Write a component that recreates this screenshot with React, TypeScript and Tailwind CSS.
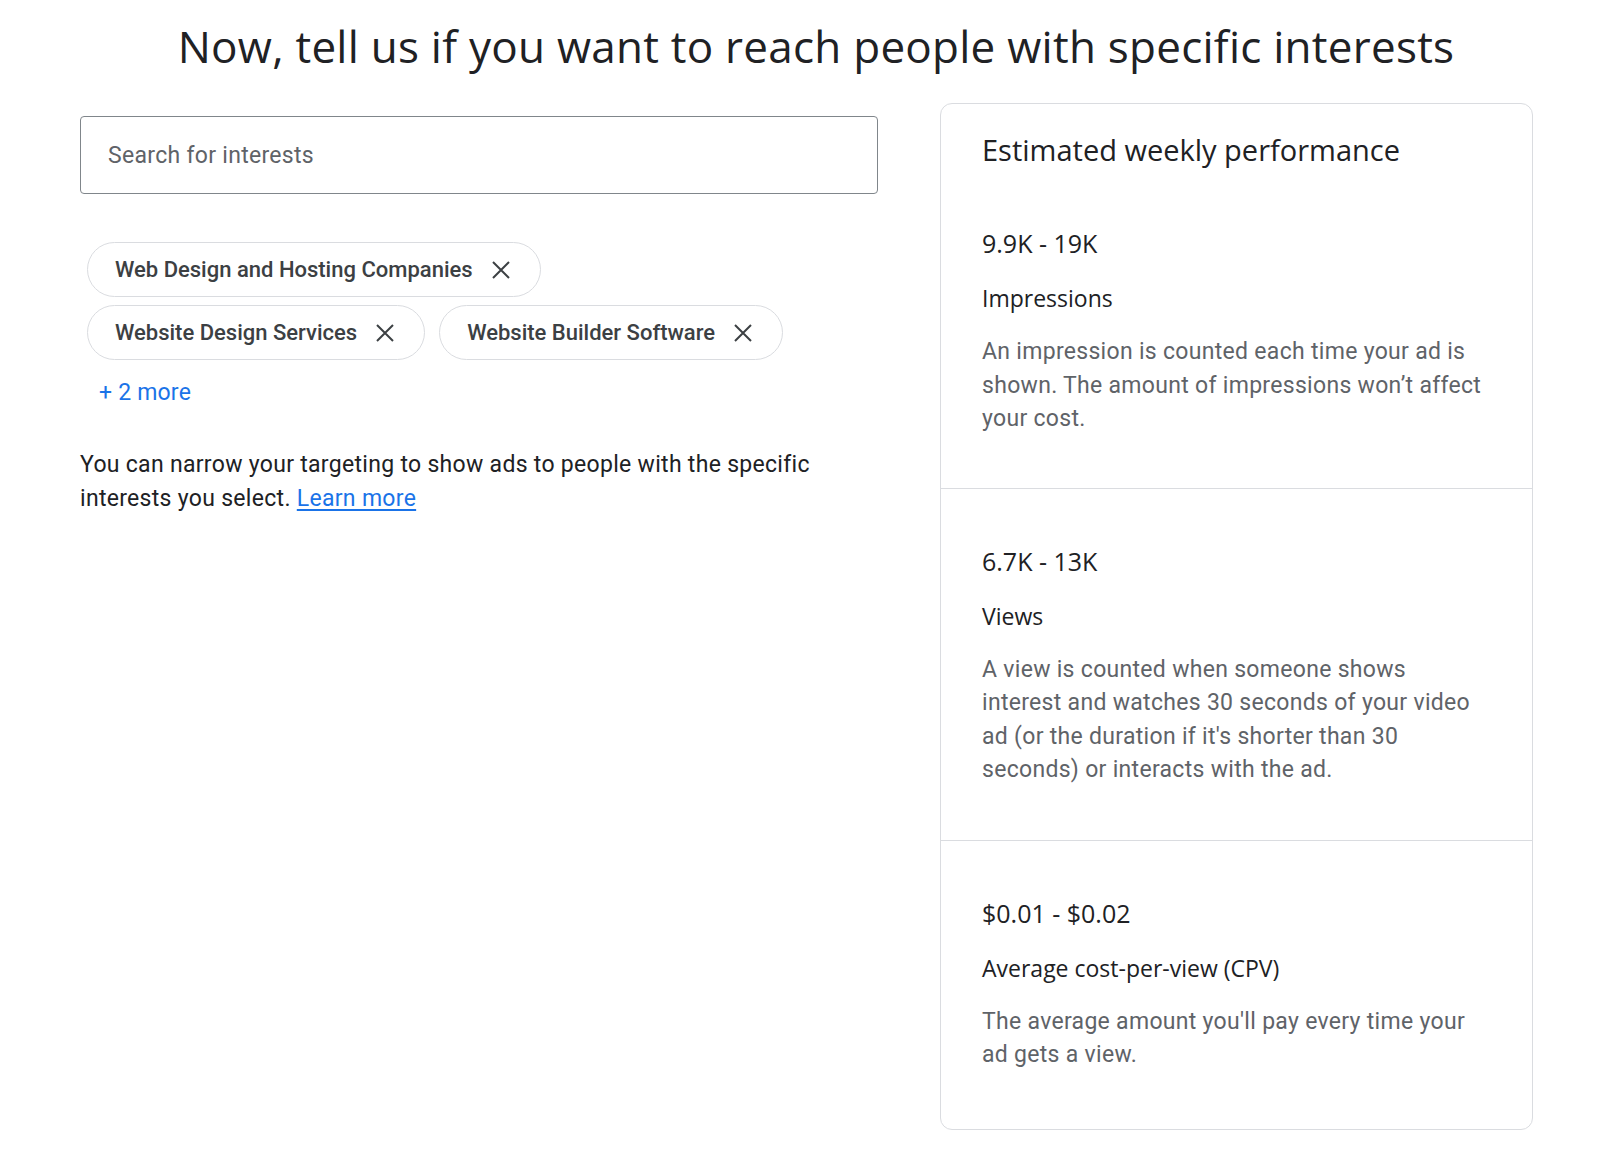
const chips = [
  ["Web Design and Hosting Companies"],
  ["Website Design Services", "Website Builder Software"],
];

const stats = [
  {
    value: "9.9K - 19K",
    label: "Impressions",
    text: "An impression is counted each time your ad is shown. The amount of impressions won’t affect your cost.",
    pad: "pt-[60px] pb-[52px]",
  },
  {
    value: "6.7K - 13K",
    label: "Views",
    text: "A view is counted when someone shows interest and watches 30 seconds of your video ad (or the duration if it's shorter than 30 seconds) or interacts with the ad.",
    pad: "border-t border-[#dadce0] pt-[57px] pb-[53px]",
  },
  {
    value: "$0.01 - $0.02",
    label: "Average cost-per-view (CPV)",
    text: "The average amount you'll pay every time your ad gets a view.",
    pad: "border-t border-[#dadce0] pt-[57px] pb-[57px]",
  },
];

const display = "font-['Open_Sans','Lato',sans-serif]";
const body = "font-['Roboto','Liberation_Sans',sans-serif]";

function CloseIcon() {
  return (
    <svg viewBox="0 0 18 18" className="h-[18px] w-[18px] shrink-0 text-[#3c4043]" fill="none">
      <path d="M1 1L17 17M17 1L1 17" stroke="currentColor" strokeWidth="2" />
    </svg>
  );
}

function Chip({ label }: { label: string }) {
  return (
    <div className="flex h-[55px] items-center gap-[19px] rounded-full border border-[#dadce0] pl-[27px] pr-[30px]">
      <span className="text-[22px] font-medium text-[#3c4043]">{label}</span>
      <CloseIcon />
    </div>
  );
}

export default function App() {
  return (
    <div className={`min-h-screen bg-white ${body}`}>
      <h1 className={`pl-[32px] pt-[18px] text-center text-[44px] leading-[56px] tracking-[0.25px] text-[#202124] ${display}`}>
        Now, tell us if you want to reach people with specific interests
      </h1>

      <div className="mt-[29px] flex gap-[62px] pl-[80px]">
        <div className="w-[798px] pt-[13px]">
          <div className="flex h-[78px] items-center rounded-[4px] border border-[#80868b] px-[27px] pt-[3px]">
            <span className="text-[23px] tracking-[0.3px] text-[#5f6368]">Search for interests</span>
          </div>

          <div className="mt-[48px] flex flex-col gap-[8px] pl-[7px]">
            {chips.map((row, i) => (
              <div key={i} className="flex gap-[14px]">
                {row.map((c) => (
                  <Chip key={c} label={c} />
                ))}
              </div>
            ))}
          </div>

          <div className="mt-[19px] pl-[19px] text-[23px] leading-[28px] tracking-[0.2px] text-[#1a73e8]">+ 2 more</div>

          <p className="mt-[41px] text-[23px] leading-[33.5px] tracking-[0.3px] text-[#202124]">
            You can narrow your targeting to show ads to people with the specific interests you
            select.{" "}
            <a href="#" className="text-[#1a73e8] underline underline-offset-[3px]">
              Learn more
            </a>
          </p>
        </div>

        <div className="h-fit w-[593px] rounded-[12px] border border-[#dadce0]">
          <div className={`pl-[41px] pr-[44px] pt-[28px] text-[29px] leading-[36px] text-[#202124] ${display}`}>
            Estimated weekly performance
          </div>
          {stats.map((s) => (
            <div key={s.label} className={`pl-[41px] pr-[44px] ${s.pad}`}>
              <div className={`text-[25px] leading-[30px] text-[#202124] ${display}`}>{s.value}</div>
              <div className={`mt-[25px] text-[23px] leading-[30px] text-[#202124] ${display}`}>{s.label}</div>
              <p className="mt-[22px] text-[23px] leading-[33.5px] tracking-[0.3px] text-[#5f6368]">{s.text}</p>
            </div>
          ))}
        </div>
      </div>
    </div>
  );
}
